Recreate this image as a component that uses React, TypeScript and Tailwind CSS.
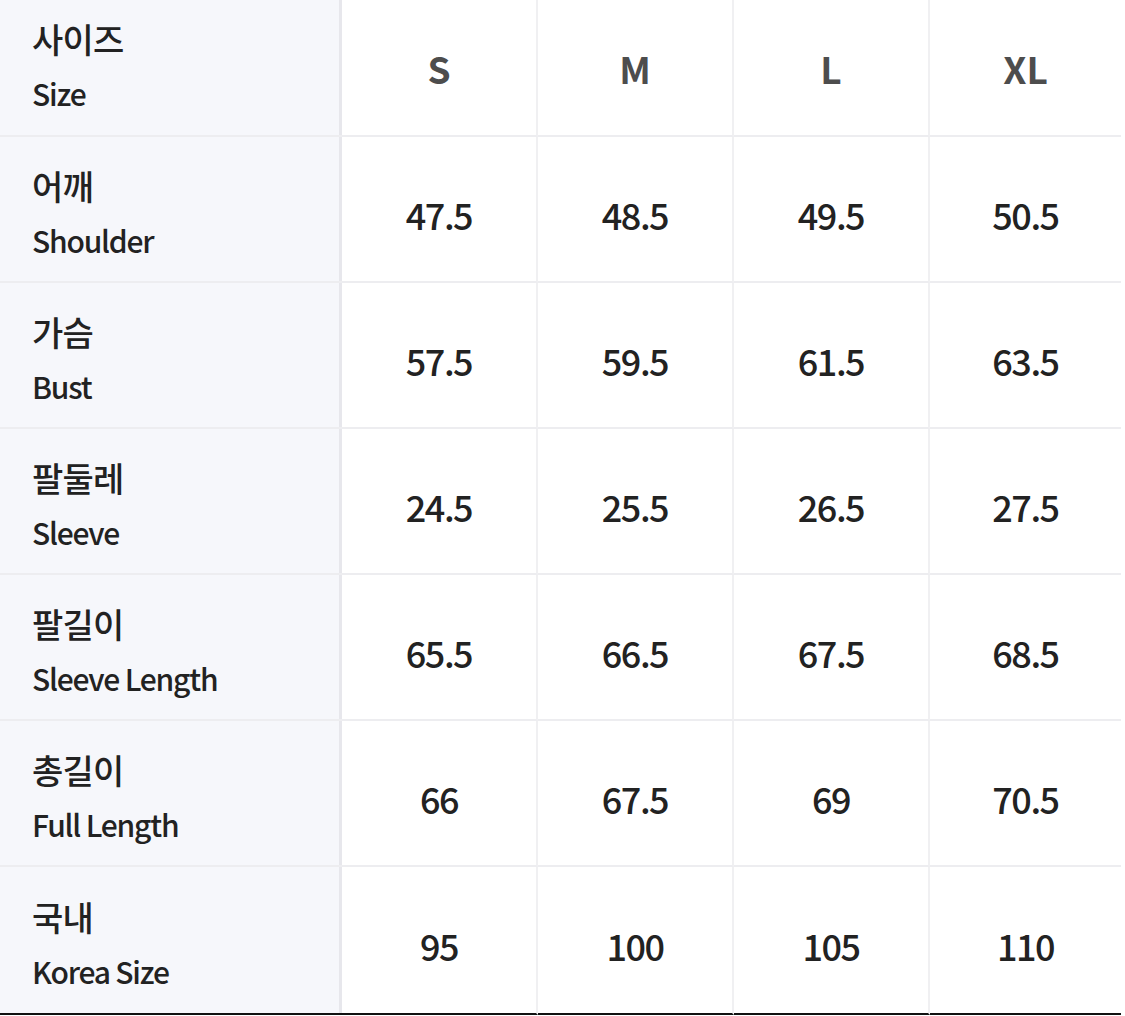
import React from "react";

const FONT = { fontFamily: '"Noto Sans CJK KR", "Noto Sans", sans-serif' };

const rows: { ko: string; en: string; v: string[] }[] = [
  { ko: "어깨", en: "Shoulder", v: ["47.5", "48.5", "49.5", "50.5"] },
  { ko: "가슴", en: "Bust", v: ["57.5", "59.5", "61.5", "63.5"] },
  { ko: "팔둘레", en: "Sleeve", v: ["24.5", "25.5", "26.5", "27.5"] },
  { ko: "팔길이", en: "Sleeve Length", v: ["65.5", "66.5", "67.5", "68.5"] },
  { ko: "총길이", en: "Full Length", v: ["66", "67.5", "69", "70.5"] },
  { ko: "국내", en: "Korea Size", v: ["95", "100", "105", "110"] },
];

function Label({ ko, en, header }: { ko: string; en: string; header?: boolean }) {
  return (
    <div
      className={`flex h-full flex-col justify-center gap-[14px] bg-[#f6f7fb] pl-[32px] border-r-[3px] border-r-[#e7e7ec] ${header ? "pb-[4px]" : "pt-[8px]"}`}
    >
      <div className="text-[34px] leading-[40px] font-medium text-[#222] tracking-[-0.8px]">{ko}</div>
      <div className="text-[30px] leading-[40px] font-medium text-[#222] tracking-[-1.2px]">{en}</div>
    </div>
  );
}

export default function App() {
  return (
    <div className="w-[1125px] h-[1016px] bg-white" style={FONT}>
      <div className="grid grid-cols-[342px_196px_196px_196px_191px]">
        <div className="h-[137px] border-b-[2px] border-b-[#ededf0]">
          <Label ko="사이즈" en="Size" header />
        </div>
        {["S", "M", "L", "XL"].map((s, i) => (
          <div
            key={s}
            className={`h-[137px] flex items-center justify-center border-b-[2px] border-b-[#ededf0] ${i < 3 ? "border-r-[2px] border-r-[#f0f0f2]" : ""}`}
          >
            <span className="text-[37px] font-bold text-[#4d4d4d] pt-[2px]">{s}</span>
          </div>
        ))}
        {rows.map((r, ri) => {
          const last = ri === rows.length - 1;
          const rowCls = last
            ? "h-[148px] border-b-[2px] border-b-[#111]"
            : "h-[146px] border-b-[2px] border-b-[#ededf0]";
          return (
            <React.Fragment key={r.en}>
              <div className={rowCls}>
                <Label ko={r.ko} en={r.en} />
              </div>
              {r.v.map((v, i) => (
                <div
                  key={i}
                  className={`${rowCls} flex items-center justify-center ${i < 3 ? "border-r-[2px] border-r-[#f0f0f2]" : ""}`}
                >
                  <span className="text-[36px] font-medium text-[#222] tracking-[-1.5px] pt-[10px]">{v}</span>
                </div>
              ))}
            </React.Fragment>
          );
        })}
      </div>
    </div>
  );
}
